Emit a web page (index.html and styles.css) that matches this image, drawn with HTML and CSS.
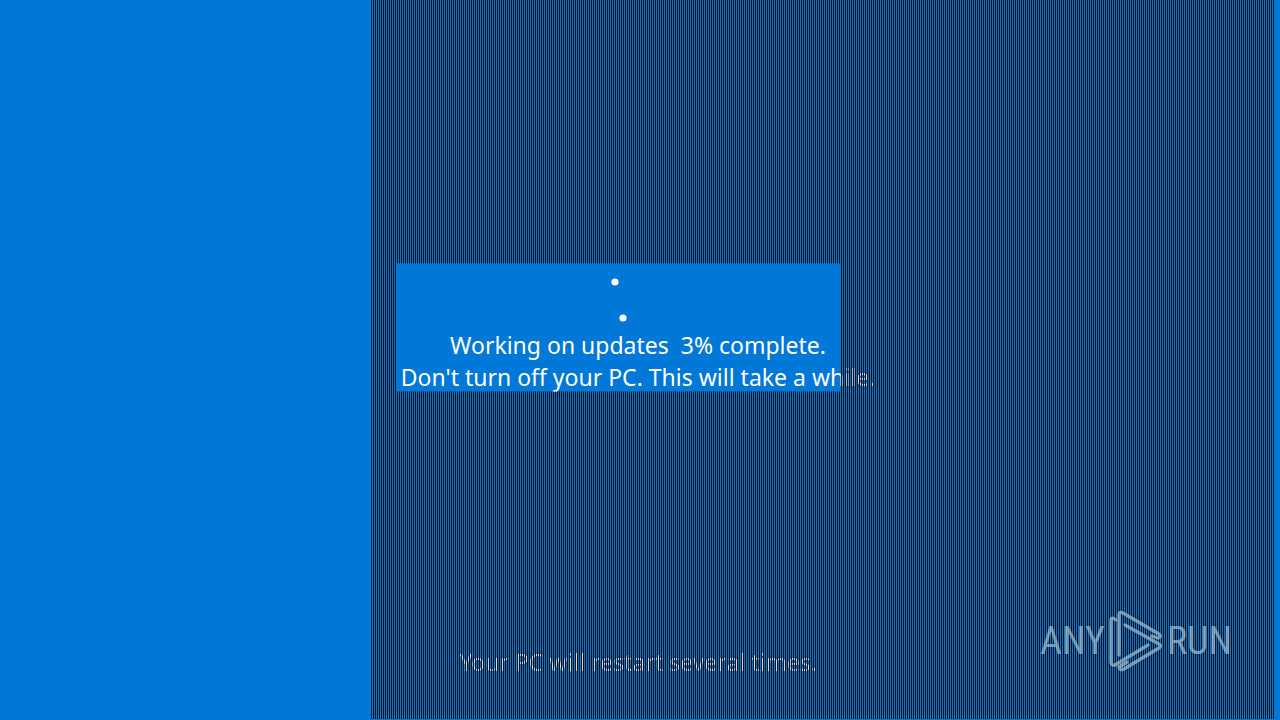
FILE: index.html
```
<!DOCTYPE html>
<html lang="en">
<head>
    <meta charset="UTF-8">
    <meta name="viewport" content="width=device-width, initial-scale=1.0">
    <title>Working on updates</title>
    <link rel="stylesheet" href="styles.css">
</head>
<body>

    <main class="update-screen">
        <div class="status">
            <div class="spinner">
                <svg width="40" height="58" viewBox="0 0 40 58" aria-hidden="true">
                    <circle cx="17" cy="11" r="3.6" fill="#fff"/>
                    <circle cx="25" cy="47" r="3.6" fill="#fff"/>
                </svg>
            </div>
            <p>Working on updates&nbsp; 3% complete.</p>
            <p>Don't turn off your PC. This will take a while.</p>
        </div>
        <p class="restart-note">Your PC will restart several times.</p>
    </main>

    <!-- Dark scan lines over everything except the status area -->
    <div class="scanlines"></div>

    <div class="watermark">
        <span>ANY</span>
        <svg width="54" height="62" viewBox="11 9 54 62" aria-hidden="true">
            <g fill="none" stroke="#b4ccdc" stroke-width="3.4" stroke-linejoin="round" stroke-linecap="round">
                <path d="M21 54V14Q21 10 25 12L61 33Q64 36 60 37L54 35"/>
                <path d="M27 24L61 43Q64 45 61 47L26 68Q22 70 21 66L29 61"/>
                <path d="M18 19Q13 15 13 20V61Q13 65 17 64L50 44"/>
            </g>
        </svg>
        <span>RUN</span>
    </div>

</body>
</html>
```
FILE: styles.css
```
body {
    margin: 0;
    background-color: #0078d7;
    color: #fff;
    font-family: "Noto Sans", "Open Sans", sans-serif;
    font-size: 23px;
    line-height: 32px;
    overflow: hidden;
}
p {
    margin: 0;
}
.update-screen {
    display: flex;
    flex-direction: column;
    min-height: 100vh;
    box-sizing: border-box;
    padding: 0 4px 42px 0;
    text-align: center;
}
.status {
    margin: auto 0;
    padding-top: 18px;
}
.spinner {
    display: flex;
    justify-content: center;
    padding-right: 40px;
}
/* --- Scan lines --- */
.scanlines {
    position: absolute;
    top: 0;
    bottom: 1px;
    left: 29%;
    right: 6px;
    background-image: repeating-linear-gradient(to right, #020e2c 0, #020e2c 1px, rgba(110, 100, 70, 0.24) 1px, rgba(110, 100, 70, 0.24) 2px);
    --hole-left: 25px;
    --hole-right: 469px;
    --hole-top: calc(50% - 96px);
    --hole-bottom: calc(50% + 32px);
    clip-path: polygon(
        0 0, 100% 0, 100% 100%, 0 100%, 0 0,
        var(--hole-left) var(--hole-top),
        var(--hole-left) var(--hole-bottom),
        var(--hole-right) var(--hole-bottom),
        var(--hole-right) var(--hole-top),
        var(--hole-left) var(--hole-top)
    );
}
/* --- Watermark --- */
.watermark {
    position: absolute;
    right: 48px;
    bottom: 48px;
    display: flex;
    align-items: center;
    gap: 4px;
    color: #b4ccdc;
    font-family: "Roboto Condensed", "Liberation Sans Narrow", "Liberation Sans", sans-serif;
    font-size: 38px;
    font-weight: 400;
    line-height: 62px;
    opacity: 0.65;
}
.watermark svg {
    display: block;
}
```
